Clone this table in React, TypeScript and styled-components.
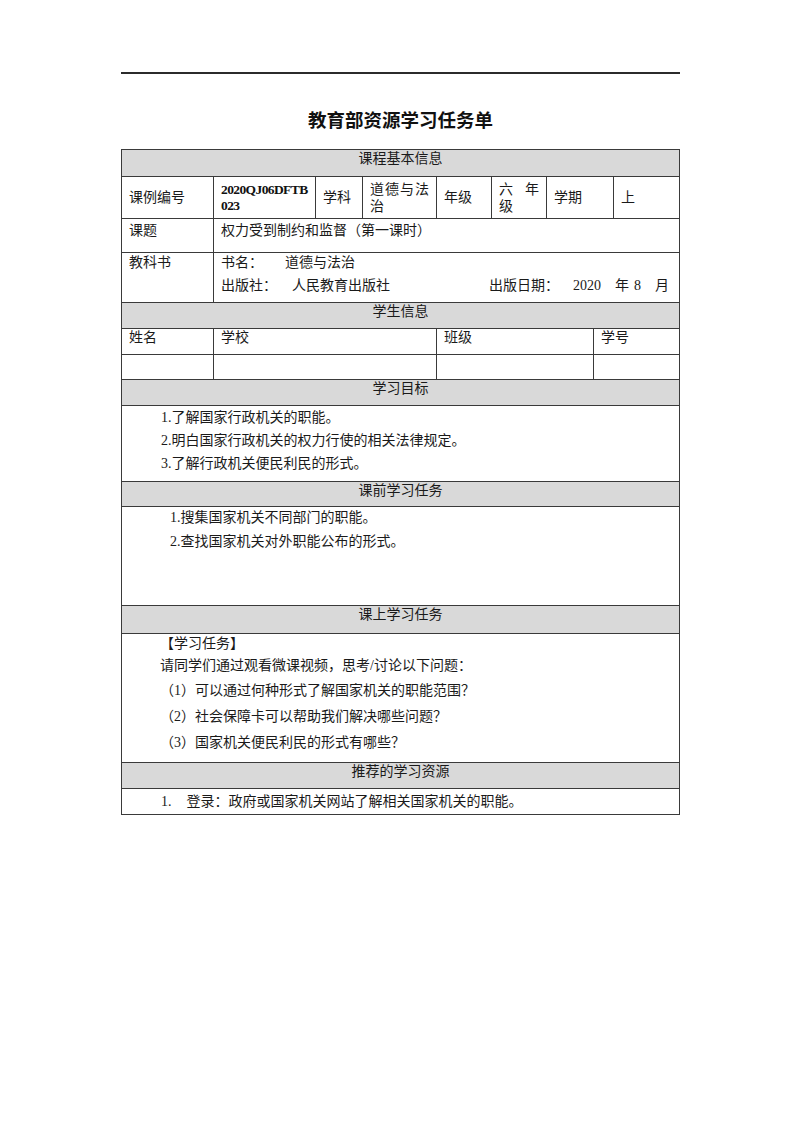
import React from 'react';
import styled, { createGlobalStyle } from 'styled-components';

const LINE = '#3a3a3a';

const Global = createGlobalStyle`
  html, body { margin: 0; padding: 0; background: #ffffff; }
  body {
    font-family: "Liberation Serif", "Noto Sans CJK SC", serif;
    color: #1a1a1a;
    font-size: 14px;
  }
`;

const Page = styled.div`
  width: 559px;
  margin-left: 121px;
  padding: 72px 0 40px;
`;

const Rule = styled.div`
  height: 2px;
  background: #2b2b2b;
`;

const Title = styled.h1`
  margin: 32px 0 17px;
  font-family: "Noto Sans CJK SC", sans-serif;
  font-weight: 700;
  font-size: 18.5px;
  line-height: 26px;
  text-align: center;
  color: #111;
`;

const Table = styled.div`
  display: flex;
  flex-direction: column;
  border: 1px solid ${LINE};
  border-bottom: none;
`;

const Row = styled.div<{ $cols?: string; $h: number }>`
  display: grid;
  grid-template-columns: ${(p) => p.$cols ?? '1fr'};
  height: ${(p) => p.$h}px;
  box-sizing: border-box;
  border-bottom: 1px solid ${LINE};
`;

const HeaderRow = styled(Row)`
  background: #d9d9d9;
  align-items: start;
  justify-items: center;
  line-height: 18px;
`;

const Cell = styled.div<{ $top?: boolean; $pt?: number; $pl?: number }>`
  border-left: 1px solid ${LINE};
  &:first-child { border-left: none; }
  padding: ${(p) => p.$pt ?? 0}px 7px 0 ${(p) => p.$pl ?? 7}px;
  display: flex;
  flex-direction: column;
  justify-content: ${(p) => (p.$top ? 'flex-start' : 'center')};
  line-height: 17px;
  min-width: 0;
  overflow: hidden;
`;

const Justified = styled.div`
  text-align: justify;
  text-align-last: left;
`;

const Code = styled.div`
  font-weight: 700;
  font-size: 13.5px;
  letter-spacing: -0.6px;
  line-height: 16px;
  color: #111;
`;

const Line = styled.div<{ $h?: number }>`
  display: flex;
  align-items: center;
  line-height: ${(p) => p.$h ?? 23}px;
  white-space: nowrap;
`;

const Piece = styled.span<{ $ml?: number }>`
  margin-left: ${(p) => p.$ml ?? 0}px;
`;

const Num = styled.span`
  margin-right: 15px;
`;

const row1Cols = '91px 102px 47px 74px 55px 55px 67px 66px';
const twoCols = '91px 1fr';
const studentCols = '91px 223px 157px 86px';

export default function App() {
  return (
    <>
      <Global />
      <Page>
        <Rule />
        <Title>教育部资源学习任务单</Title>
        <Table>
          <HeaderRow $h={27}>课程基本信息</HeaderRow>

          <Row $cols={row1Cols} $h={42}>
            <Cell>课例编号</Cell>
            <Cell>
              <Code>
                2020QJ06DFTB
                <br />
                023
              </Code>
            </Cell>
            <Cell>学科</Cell>
            <Cell>
              <Justified>道德与法治</Justified>
            </Cell>
            <Cell>年级</Cell>
            <Cell>
              <Justified>六年级</Justified>
            </Cell>
            <Cell>学期</Cell>
            <Cell>上</Cell>
          </Row>

          <Row $cols={twoCols} $h={34}>
            <Cell $top $pt={3}>
              <Line $h={18}>课题</Line>
            </Cell>
            <Cell $top $pt={3}>
              <Line $h={18}>权力受到制约和监督（第一课时）</Line>
            </Cell>
          </Row>

          <Row $cols={twoCols} $h={50}>
            <Cell $top>
              <Line $h={20}>教科书</Line>
            </Cell>
            <Cell $top>
              <Line $h={20}>
                <Piece>书名：</Piece>
                <Piece $ml={22}>道德与法治</Piece>
              </Line>
              <Line $h={25}>
                <Piece>出版社：</Piece>
                <Piece $ml={15}>人民教育出版社</Piece>
                <Piece $ml={99}>出版日期：</Piece>
                <Piece $ml={14}>2020</Piece>
                <Piece $ml={14}>年</Piece>
                <Piece $ml={5}>8</Piece>
                <Piece $ml={14}>月</Piece>
              </Line>
            </Cell>
          </Row>

          <HeaderRow $h={26}>学生信息</HeaderRow>

          <Row $cols={studentCols} $h={26}>
            <Cell $top>
              <Line $h={18}>姓名</Line>
            </Cell>
            <Cell $top>
              <Line $h={18}>学校</Line>
            </Cell>
            <Cell $top>
              <Line $h={18}>班级</Line>
            </Cell>
            <Cell $top>
              <Line $h={18}>学号</Line>
            </Cell>
          </Row>
          <Row $cols={studentCols} $h={25}>
            <Cell />
            <Cell />
            <Cell />
            <Cell />
          </Row>

          <HeaderRow $h={26}>学习目标</HeaderRow>
          <Row $h={76}>
            <Cell $top $pl={39}>
              <Line>1.了解国家行政机关的职能。</Line>
              <Line>2.明白国家行政机关的权力行使的相关法律规定。</Line>
              <Line>3.了解行政机关便民利民的形式。</Line>
            </Cell>
          </Row>

          <HeaderRow $h={25}>课前学习任务</HeaderRow>
          <Row $h={99}>
            <Cell $top $pl={48}>
              <Line $h={22}>1.搜集国家机关不同部门的职能。</Line>
              <Line $h={25}>2.查找国家机关对外职能公布的形式。</Line>
            </Cell>
          </Row>

          <HeaderRow $h={28}>课上学习任务</HeaderRow>
          <Row $h={129}>
            <Cell $top $pl={38}>
              <Line $h={19}>【学习任务】</Line>
              <Line $h={25}>请同学们通过观看微课视频，思考/讨论以下问题：</Line>
              <Line $h={26}>（1）可以通过何种形式了解国家机关的职能范围？</Line>
              <Line $h={26}>（2）社会保障卡可以帮助我们解决哪些问题？</Line>
              <Line $h={26}>（3）国家机关便民利民的形式有哪些？</Line>
            </Cell>
          </Row>

          <HeaderRow $h={26}>推荐的学习资源</HeaderRow>
          <Row $h={26}>
            <Cell $pl={39}>
              <Line $h={20}>
                <Num>1.</Num>登录：政府或国家机关网站了解相关国家机关的职能。
              </Line>
            </Cell>
          </Row>
        </Table>
      </Page>
    </>
  );
}
